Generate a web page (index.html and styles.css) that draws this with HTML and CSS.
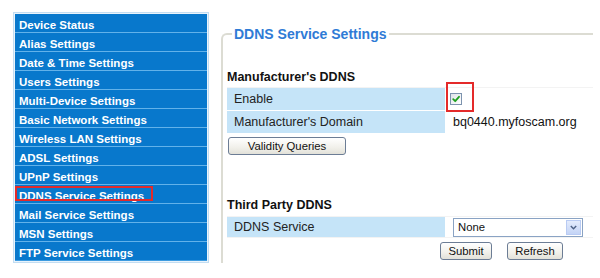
FILE: index.html
```html
<!DOCTYPE html>
<html>
<head>
<meta charset="utf-8">
<link rel="stylesheet" href="styles.css">
</head>
<body>
<div class="page">
  <ul class="menu">
    <li>Device Status</li>
    <li>Alias Settings</li>
    <li>Date &amp; Time Settings</li>
    <li>Users Settings</li>
    <li>Multi-Device Settings</li>
    <li>Basic Network Settings</li>
    <li>Wireless LAN Settings</li>
    <li>ADSL Settings</li>
    <li>UPnP Settings</li>
    <li class="active">DDNS Service Settings</li>
    <li>Mail Service Settings</li>
    <li>MSN Settings</li>
    <li>FTP Service Settings</li>
  </ul>
  <fieldset class="panel">
    <legend>DDNS Service Settings</legend>
    <h3 class="section first">Manufacturer's DDNS</h3>
    <div class="grid">
      <div class="label">Enable</div>
      <div class="value check-cell">
        <span class="checkbox">
          <svg width="10" height="10" viewBox="0 0 10 10"><path d="M2.2 5.2 L4.2 7.2 L8 2.8" fill="none" stroke="#1ea01e" stroke-width="1.8" stroke-linecap="round" stroke-linejoin="round"/></svg>
        </span>
        <span class="mark"></span>
      </div>
      <div class="label">Manufacturer's Domain</div>
      <div class="value">bq0440.myfoscam.org</div>
    </div>
    <button class="btn validity">Validity Queries</button>
    <h3 class="section second">Third Party DDNS</h3>
    <div class="grid single">
      <div class="label">DDNS Service</div>
      <div class="value">
        <div class="select">
          <span class="select-text">None</span>
          <span class="select-arrow">
            <svg width="7" height="5" viewBox="0 0 7 5"><path d="M0.8 1 L3.5 3.8 L6.2 1" fill="none" stroke="#4d6185" stroke-width="1.4"/></svg>
          </span>
        </div>
      </div>
    </div>
    <div class="actions">
      <button class="btn submit">Submit</button>
      <button class="btn refresh">Refresh</button>
    </div>
  </fieldset>
</div>
</body>
</html>
```

FILE: styles.css
```css
html, body {
  margin: 0;
  padding: 0;
  background: #ffffff;
}

.page {
  display: flex;
  align-items: flex-start;
  padding: 12px 0 0 13px;
  font-family: "Liberation Sans", Arial, sans-serif;
}

.menu {
  list-style: none;
  margin: 0;
  padding: 1px;
  width: 192px;
  border: 1px solid #c2ddf2;
  background: #e9f3fb;
}

.menu li {
  position: relative;
  height: 16px;
  padding: 2px 0 0 4px;
  line-height: 18px;
  background: #0878cc;
  border-bottom: 1px solid #62b2ea;
  color: #ffffff;
  font-weight: bold;
  font-size: 11.5px;
  white-space: nowrap;
}

.menu li:last-child {
  border-bottom: 1px solid #3d9be0;
}

.menu li.active::after {
  content: "";
  position: absolute;
  left: 0;
  top: 1px;
  width: 134px;
  height: 11px;
  border: 2px solid #e42a2a;
}

.panel {
  margin: 14px 0 0 12px;
  padding: 0 0 3px 4px;
  width: 372px;
  box-sizing: border-box;
  border: 2px solid #dcdcd3;
  border-right: none;
  border-bottom: none;
  border-top-left-radius: 6px;
  min-width: 0;
}

.panel legend {
  margin-left: 5px;
  padding: 0 2px;
  line-height: 16px;
  font-size: 14px;
  font-weight: bold;
  color: #2f7bd6;
}

.section {
  margin: 0;
  font-size: 12.5px;
  line-height: 16px;
  font-weight: bold;
  color: #111111;
}

.section.first {
  margin: 27px 0 3px;
}

.section.second {
  margin: 42px 0 4px;
}

.grid {
  display: grid;
  grid-template-columns: 218px 1fr;
  grid-auto-rows: 22px;
  row-gap: 1px;
  column-gap: 1px;
  border-top: 1px solid #f3f3f3;
  margin-top: -1px;
}

.grid.single {
  grid-auto-rows: 20px;
  border-bottom: 1px solid #f3f3f3;
}

.label {
  background: #c5e4f8;
  padding-left: 7px;
  font-size: 12.5px;
  color: #222222;
  display: flex;
  align-items: center;
}

.value {
  position: relative;
  padding-left: 7px;
  font-size: 12.5px;
  color: #111111;
  display: flex;
  align-items: center;
}

.check-cell {
  padding-left: 4px;
}

.checkbox {
  width: 10px;
  height: 10px;
  border: 1px solid #7d93ae;
  background: linear-gradient(135deg, #dfe3e8, #ffffff);
  display: flex;
  align-items: center;
  justify-content: center;
}

.mark {
  position: absolute;
  left: 0;
  top: -6px;
  width: 24px;
  height: 26px;
  border: 2px solid #e42a2a;
}

.btn {
  font-family: "Liberation Sans", Arial, sans-serif;
  font-size: 11.3px;
  color: #111111;
  height: 18px;
  padding: 0;
  border: 1px solid #6c7d95;
  border-radius: 3px;
  background: linear-gradient(#ffffff, #f1f0ea 60%, #e2e1d9);
  line-height: 16px;
}

.validity {
  display: block;
  margin: 4px 0 0 1px;
  width: 118px;
}

.select {
  width: 130px;
  height: 19px;
  box-sizing: border-box;
  border: 1px solid #8aa3c4;
  display: flex;
  align-items: center;
  justify-content: space-between;
  background: #ffffff;
}

.select-text {
  padding-left: 4px;
  font-size: 11.3px;
  color: #111111;
}

.select-arrow {
  width: 15px;
  height: 15px;
  margin-right: 1px;
  border: 1px solid #b9cbf3;
  box-sizing: border-box;
  background: linear-gradient(#e3ebfc, #c4d4f6);
  display: flex;
  align-items: center;
  justify-content: center;
}

.actions {
  display: flex;
  gap: 15px;
  margin: 4px 0 0 213px;
}

.submit {
  width: 52px;
}

.refresh {
  width: 56px;
}
```
